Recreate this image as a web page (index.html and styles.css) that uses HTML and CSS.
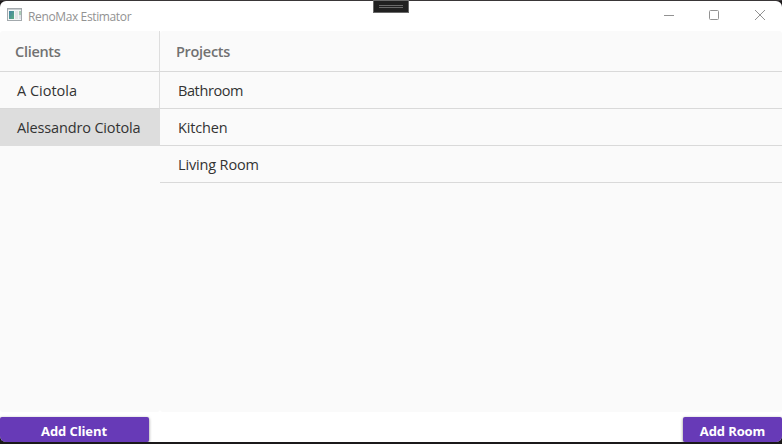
FILE: index.html
```html
<!DOCTYPE html>
<html lang="en">
<head>
<meta charset="utf-8">
<title>RenoMax Estimator</title>
<link rel="stylesheet" href="styles.css">
</head>
<body>
<div class="window">
  <header class="titlebar">
    <svg class="app-icon" width="16" height="14" viewBox="0 0 16 14">
      <defs><linearGradient id="tile" x1="0" y1="0" x2="1" y2="1"><stop offset="0" stop-color="#4383a5"/><stop offset="1" stop-color="#5cab80"/></linearGradient></defs>
      <rect x=".5" y=".5" width="14" height="12" fill="#f4f5f6" stroke="#a3a9ad"/>
      <path d="M1 1.5h13" stroke="#c8cdd0"/>
      <rect x="2" y="3" width="5" height="8" fill="url(#tile)"/>
      <rect x="8" y="3" width="3" height="8" fill="#e2e3e5"/>
      <path d="M12 3h2v4h-2z" fill="#a7cbb5"/><path d="M12 7h2v4h-2z" fill="#e0e1e8"/>
    </svg>
    <h1 class="title">RenoMax Estimator</h1>
    <svg class="controls" width="102" height="12" viewBox="0 0 102 12" fill="none" stroke="#929292">
      <path d="M0 6.5h10"/>
      <rect x="45.5" y="1.5" width="9" height="9" rx="1"/>
      <path d="M91 1l10 10M101 1L91 11"/>
    </svg>
  </header>
  <main class="panels">
    <section class="panel clients">
      <h2 class="heading">Clients</h2>
      <ul class="list">
        <li class="row short-name">A Ciotola</li>
        <li class="row selected">Alessandro Ciotola</li>
      </ul>
    </section>
    <section class="panel projects">
      <h2 class="heading">Projects</h2>
      <ul class="list">
        <li class="row bathroom">Bathroom</li>
        <li class="row">Kitchen</li>
        <li class="row">Living Room</li>
      </ul>
    </section>
  </main>
  <footer class="actions">
    <button class="button add-client">Add Client</button>
    <button class="button add-room">Add Room</button>
  </footer>
</div>
<div class="grip"></div>
</body>
</html>
```
FILE: styles.css
```css
* { box-sizing: border-box; }
body {
  margin: 0;
  height: 444px;
  padding: 1px 0 2px;
  overflow: hidden;
  background: linear-gradient(#393637 0, #393637 1px, #1b191a 1px);
  font-family: "Open Sans", "Noto Sans", sans-serif;
  color: #333;
}
.window {
  height: 441px;
  display: flex;
  flex-direction: column;
  background: #fff;
  border-radius: 6px;
  overflow: hidden;
}
.titlebar {
  height: 30px;
  flex: none;
  display: flex;
  align-items: center;
  padding: 0 16px 0 7px;
}
.app-icon { margin-top: -2px; }
.title {
  margin: 0 auto 0 5px;
  font-size: 12px;
  font-weight: 400;
  letter-spacing: -.37px;
  color: #929292;
}
.controls { margin-top: -2px; }
.panels {
  height: 381px;
  flex: none;
  display: grid;
  grid-template-columns: 160px 1fr;
}
.panel { background: #fafafa; border-radius: 3px; }
.heading {
  height: 41px;
  margin: 0;
  padding-left: 15px;
  border-bottom: 1px solid #d9d9d9;
  font-size: 14.5px;
  line-height: 41px;
  font-weight: 600;
  letter-spacing: -.3px;
  color: #717171;
}
.clients .heading { border-right: 1px solid #dedede; }
.projects .heading { padding-left: 16px; }
.list { margin: 0; padding: 0; list-style: none; }
.row {
  height: 37px;
  padding-left: 18px;
  border-bottom: 1px solid #d9d9d9;
  font-size: 14.5px;
  line-height: 37px;
  letter-spacing: -.15px;
  white-space: nowrap;
}
.bathroom { letter-spacing: -.4px; }
.clients .row { padding-left: 17px; border-right: 1px solid #dedede; }
.short-name { letter-spacing: 0; }
.clients .selected { background: #ddd; border-color: #ddd; }
.actions {
  height: 30px;
  flex: none;
  padding-top: 5px;
  display: flex;
  justify-content: space-between;
}
.button {
  height: 25px;
  padding: 3px 0 0;
  border: 0;
  border-radius: 2px;
  background: #673ab7;
  box-shadow: 0 1px 3px rgba(0, 0, 0, .5);
  color: #fff;
  font: 700 13px/22px "Open Sans", sans-serif;
  letter-spacing: -.1px;
}
.add-client { width: 149px; padding-right: 1px; }
.add-room { width: 99px; }
.grip {
  position: absolute;
  left: 373px;
  top: 0;
  width: 36px;
  height: 13px;
  border: 1px solid #696969;
  background:
    linear-gradient(#696969, #696969) 5px 4px / 24px 1px no-repeat,
    linear-gradient(#696969, #696969) 5px 6px / 24px 1px no-repeat,
    #202020;
}
```
